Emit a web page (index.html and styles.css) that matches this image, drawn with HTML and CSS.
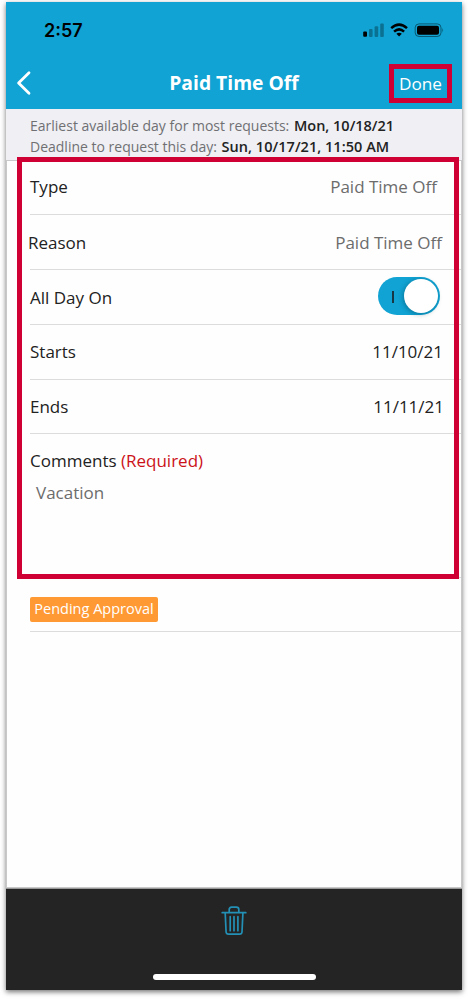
FILE: index.html
```
<!DOCTYPE html>
<html lang="en">
<head>
<meta charset="utf-8">
<title>Paid Time Off</title>
<link rel="stylesheet" href="styles.css">
</head>
<body>
<div class="phone">
  <header class="header">
    <div class="status">
      <span class="time">2:57</span>
      <svg class="indicators" width="84" height="16" viewBox="0 0 84 16">
        <g opacity=".3"><rect x="6" y="6" width="3.6" height="8" rx="1"/><rect x="11.6" y="3.2" width="3.6" height="10.8" rx="1"/><rect x="17.2" y="0.6" width="3.6" height="13.4" rx="1"/></g>
        <rect x="0.2" y="8.6" width="3.8" height="5.2" rx="1"/>
        <g fill="none" stroke="#000" stroke-width="2.5"><path d="M28.2 5.1Q36.1-1.9 44 5.1"/><path d="M31.1 8.6Q36.1 4.2 41.1 8.6"/></g>
        <path d="M33.4 10.8Q36.1 8.6 38.8 10.8L36.1 13.5Z"/>
        <rect x="52.2" y="0.9" width="25.8" height="12.6" rx="3.8" fill="none" stroke="#000" stroke-opacity=".45"/>
        <rect x="54" y="2.7" width="22" height="9" rx="2"/>
        <path d="M79.4 5Q81 7.2 79.4 9.4Z" opacity=".5"/>
      </svg>
    </div>
    <nav class="nav">
      <svg class="back" width="16" height="26" viewBox="0 0 16 26"><path d="M13 2.8L2.6 13L13 23.2" fill="none" stroke="#fff" stroke-width="2.8" stroke-linecap="round" stroke-linejoin="round"/></svg>
      <h1 class="title">Paid Time Off</h1>
      <span class="done">Done</span>
    </nav>
  </header>
  <section class="notice">
    <p><span class="notice-label">Earliest available day for most requests:</span> <b class="date">Mon, 10/18/21</b></p>
    <p><span class="notice-label">Deadline to request this day:</span> <b class="deadline">Sun, 10/17/21, 11:50 AM</b></p>
  </section>
  <main class="form">
    <div class="row type"><span>Type</span><span class="muted">Paid Time Off</span></div>
    <div class="row reason"><span>Reason</span><span class="muted">Paid Time Off</span></div>
    <div class="row all-day"><span>All Day On</span><span class="toggle"><i class="mark"></i><i class="knob"></i></span></div>
    <div class="row starts"><span>Starts</span><span>11/10/21</span></div>
    <div class="row ends"><span>Ends</span><span>11/11/21</span></div>
    <div class="comments">
      <div>Comments <span class="required">(Required)</span></div>
      <div class="comment-text">Vacation</div>
    </div>
    <div class="approval"><span class="badge">Pending Approval</span></div>
  </main>
  <footer class="footer">
    <svg width="26" height="30" viewBox="0 0 26 30" fill="none" stroke="#2390b6" stroke-width="1.7" stroke-linecap="round" stroke-linejoin="round"><path d="M1.2 6.7H24.8M8.2 6.3V3.6Q8.2 1.2 10.6 1.2H15.4Q17.8 1.2 17.8 3.6V6.3M4.2 7L5.1 26Q5.3 28.2 7.5 28.2H18.6Q20.8 28.2 21 26L21.9 7M9.2 10.7V24.7M13 10.7V24.7M16.9 10.7V24.7"/></svg>
    <div class="home"></div>
  </footer>
  <div class="highlight"></div>
</div>
</body>
</html>
```
FILE: styles.css
```
* { box-sizing: border-box; }
body { margin: 0; min-height: 1000px; padding: 2px 6px 10px; background: #fff; font-family: "Open Sans", "Noto Sans", sans-serif; color: #222; }
p, h1 { margin: 0; }
.phone { position: relative; width: 456px; height: 988px; display: flex; flex-direction: column; background: #fefefe; box-shadow: 0 2px 5px rgba(0, 0, 0, .55); }
.header { height: 107px; background: #10a3d3; }
.status { height: 53px; display: flex; justify-content: space-between; padding: 20px 15px 0 38px; }
.time { font: 600 18px/18px Inter, sans-serif; color: #000; }
.indicators { margin-top: 1px; }
.nav { height: 54px; display: grid; grid-template-columns: 90px 1fr 90px; align-items: center; color: #fff; }
.back { margin: 1px 0 0 10px; }
.title { text-align: center; font-size: 19.3px; line-height: 26px; font-weight: 700; padding-top: 1px; }
.done { justify-self: end; width: 63px; height: 39px; margin: 2px 10px 0 0; border: 5px solid #cf0034; text-align: center; font-size: 17.2px; font-weight: 500; line-height: 29px; }
.notice { height: 52px; padding: 6px 0 0 24px; background: #efeff4; border-bottom: 1px solid #c9c9cc; font-size: 14px; line-height: 21px; }
.notice p { white-space: nowrap; height: 21px; }
.notice-label { color: #707073; }
.notice b { font-weight: 600; font-size: 14.5px; margin-left: 1px; }
.deadline { letter-spacing: .04px; }
.form { flex: 1; border: 1px solid #c8c8c8; border-top: 0; padding-left: 23px; font-size: 17px; line-height: 24px; }
.row { height: 55px; display: flex; align-items: center; justify-content: space-between; padding-right: 18px; border-bottom: 1px solid #dcdcdc; }
.row.type { height: 54px; padding: 0 24px 2px 0; }
.row.reason { padding: 2px 19px 0 0; }
.reason span:first-child { margin-left: -2px; }
.all-day > span:first-child { padding-top: 1px; }
.muted { color: #6c6c6c; }
.row.ends { height: 54px; padding: 1px 17px 0 0; }
.toggle { width: 62px; height: 38px; margin: -2px 3px 0 0; padding: 2px; border-radius: 19px; background: #10a3d3; display: flex; align-items: center; justify-content: space-between; }
.mark { width: 2px; height: 12px; margin: 2px 0 0 12px; background: #173744; }
.knob { width: 34px; height: 34px; border-radius: 50%; background: #fff; box-shadow: -1px 1px 5px rgba(0, 50, 70, .4); }
.comments { height: 144px; padding-top: 15px; border-bottom: 1px solid #dcdcdc; }
.required { color: #cc1219; }
.comment-text { margin: 8px 0 0 6px; color: #6c6c6c; }
.approval { height: 54px; padding-top: 19px; border-bottom: 1px solid #dcdcdc; }
.badge { display: block; width: 128px; height: 25px; border-radius: 2px; background: #ff9933; color: #fff; font-size: 14.5px; line-height: 24px; text-align: center; white-space: nowrap; }
.footer { height: 102px; border-top: 1px solid #999; background: #242424; display: flex; flex-direction: column; align-items: center; justify-content: space-between; padding: 17px 0 10px; }
.home { width: 163px; height: 6px; border-radius: 3px; background: #fff; }
.highlight { position: absolute; left: 11px; top: 155px; width: 442px; height: 422px; border: 5px solid #cf0034; }
```
